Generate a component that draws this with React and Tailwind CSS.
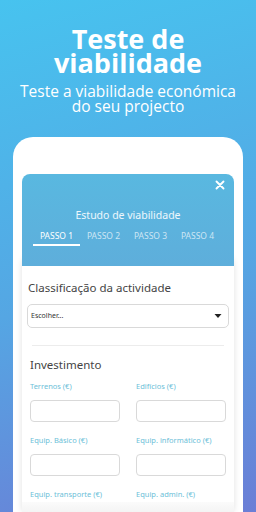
export default function App() {
  const fields = [
    ["Terrenos (€)", "Edifícios (€)"],
    ["Equip. Básico (€)", "Equip. informático (€)"],
  ];
  return (
    <div className="w-[256px] h-[512px] overflow-hidden flex flex-col bg-[linear-gradient(165deg,#47c3ef_0%,#55a6e3_55%,#6b7ed6_100%)]">
      <div className="flex flex-col items-center text-white pt-[27px]" style={{ fontFamily: '"Open Sans", sans-serif' }}>
        <div className="text-[27px] leading-[24px] h-[24px] font-bold text-center">Teste de</div>
        <div className="text-[27px] leading-[24px] h-[24px] font-bold text-center">viabilidade</div>
        <div className="text-[15.5px] leading-[15px] h-[15px] text-center mt-[9px]">Teste a viabilidade económica</div>
        <div className="text-[15.5px] leading-[15px] h-[15px] text-center">do seu projecto</div>
      </div>
      <div className="mx-[13px] mt-[23px] flex-1 bg-white rounded-t-[20px] px-[9px] pt-[37px] flex flex-col" style={{ fontFamily: '"Noto Sans", sans-serif' }}>
        <div className="rounded-t-[8px] bg-[linear-gradient(180deg,#59b8e0,#5eaedb)] h-[92px] flex flex-col relative">
          <svg className="absolute right-[9px] top-[6px]" width="10" height="10" viewBox="0 0 10 10">
            <path d="M1.5 1.5 L8.5 8.5 M8.5 1.5 L1.5 8.5" stroke="white" strokeWidth="1.9" strokeLinecap="round" />
          </svg>
          <div className="text-white/90 text-[10.5px] text-center mt-[34px]">Estudo de viabilidade</div>
          <div className="flex pl-[11px] mt-[5px]">
            {["PASSO 1", "PASSO 2", "PASSO 3", "PASSO 4"].map((t, i) => (
              <div key={t} className="w-[47px] flex flex-col items-center">
                <div className={`text-[8.5px] leading-[14px] ${i === 0 ? "text-white" : "text-white/70"}`}>{t}</div>
                <div className={`h-[2px] w-full mt-[1px] ${i === 0 ? "bg-white" : "bg-transparent"}`}></div>
              </div>
            ))}
          </div>
        </div>
        <div className="-mt-[9px] bg-white rounded-t-[8px] shadow-[0_0_6px_rgba(0,0,0,0.12)] flex-1 flex flex-col text-[#444]">
          <div className="flex-1 px-[5px] pt-[23px]">
            <div className="text-[11.5px] leading-[16px] pl-[1px]">Classificação da actividade</div>
            <div className="mt-[8px] h-[24px] border border-[#d9d9d9] rounded-[5px] flex items-center justify-between px-[3px]">
              <span className="text-[7px] text-[#333]">Escolher...</span>
              <svg width="8" height="6" viewBox="0 0 8 6" className="mr-[3px]"><path d="M0.5 1 L7.5 1 L4 5 Z" fill="#222" /></svg>
            </div>
            <div className="mx-[5px] mt-[17px] h-px bg-[#ececec]"></div>
            <div className="text-[11.5px] leading-[16px] pl-[3px] mt-[11px]">Investimento</div>
            <div className="px-[3px] mt-[8px] grid grid-cols-2 gap-x-[16px]">
              {fields.map((row, r) =>
                row.map((f) => (
                  <div key={f} className={r === 1 ? "mt-[13px]" : ""}>
                    <div className="text-[7.5px] leading-[10px] text-[#6cc0d8]">{f}</div>
                    <div className="mt-[9px] h-[22px] border border-[#d9d9d9] rounded-[4px]"></div>
                  </div>
                ))
              )}
              <div className="mt-[13px] text-[7.5px] leading-[10px] text-[#6cc0d8]">Equip. transporte (€)</div>
              <div className="mt-[13px] text-[7.5px] leading-[10px] text-[#6cc0d8]">Equip. admin. (€)</div>
            </div>
          </div>
          <div className="h-[10px] bg-[linear-gradient(180deg,#fbfbfb,#f4f4f4)]"></div>
        </div>
      </div>
    </div>
  );
}
